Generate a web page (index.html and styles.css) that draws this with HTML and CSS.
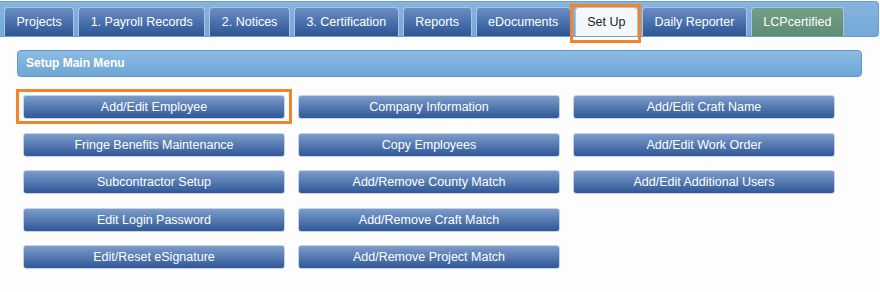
FILE: index.html
```html
<!DOCTYPE html>
<html lang="en">
<head>
    <meta charset="UTF-8">
    <title>Set Up</title>
    <link rel="stylesheet" href="styles.css">
</head>
<body>
    <div class="tabbar">
        <a class="tab">Projects</a>
        <a class="tab">1. Payroll Records</a>
        <a class="tab">2. Notices</a>
        <a class="tab">3. Certification</a>
        <a class="tab">Reports</a>
        <a class="tab">eDocuments</a>
        <a class="tab active marked">Set Up</a>
        <a class="tab">Daily Reporter</a>
        <a class="tab green">LCPcertified</a>
    </div>

    <div class="content">
        <div class="section-head">Setup Main Menu</div>
        <div class="menu-grid">
            <button class="menu-btn marked">Add/Edit Employee</button>
            <button class="menu-btn">Company Information</button>
            <button class="menu-btn">Add/Edit Craft Name</button>
            <button class="menu-btn">Fringe Benefits Maintenance</button>
            <button class="menu-btn">Copy Employees</button>
            <button class="menu-btn">Add/Edit Work Order</button>
            <button class="menu-btn">Subcontractor Setup</button>
            <button class="menu-btn">Add/Remove County Match</button>
            <button class="menu-btn">Add/Edit Additional Users</button>
            <button class="menu-btn">Edit Login Password</button>
            <button class="menu-btn">Add/Remove Craft Match</button>
            <span></span>
            <button class="menu-btn">Edit/Reset eSignature</button>
            <button class="menu-btn">Add/Remove Project Match</button>
        </div>
    </div>
</body>
</html>
```

FILE: styles.css
```css
body {
    margin: 0;
    background-color: #fdfdfd;
    font-family: "Liberation Sans", Arial, sans-serif;
}
.tabbar {
    display: flex;
    gap: 4px;
    width: 874px;
    height: 29px;
    margin-top: 1px;
    padding: 5px 0 0 4px;
    background: linear-gradient(#86b4de, #74a8d8);
    border: 1px solid #6a9fd2;
    border-left: none;
    border-radius: 0 4px 4px 0;
}
.tab {
    position: relative;
    display: flex;
    align-items: center;
    justify-content: center;
    padding: 0 11.5px;
    height: 28px;
    color: #fff;
    font-size: 12.5px;
    background: linear-gradient(#6a8ec4, #2d5595);
    border: 1px solid #a9c3e2;
    border-bottom: none;
    border-radius: 4px 4px 0 0;
}
.tab.active {
    color: #222;
    background: #f5f8fb;
}
.tab.green {
    background: linear-gradient(#71a086, #5e8d74);
}
.tab.marked::after {
    content: "";
    position: absolute;
    top: -4px;
    left: -6px;
    right: -4px;
    bottom: -7px;
    border: 3px solid #f4832a;
}
.content {
    padding: 13px 18px 0 17px;
}
.section-head {
    height: 25px;
    padding-left: 8px;
    line-height: 25px;
    color: #fff;
    font-size: 12px;
    font-weight: bold;
    background: linear-gradient(#8dbbe1, #6ea6d6);
    border: 1px solid #5e98cf;
    border-radius: 4px;
}
.menu-grid {
    display: grid;
    grid-template-columns: repeat(3, 262px);
    column-gap: 13px;
    row-gap: 13.5px;
    padding: 18px 0 0 6px;
}
.menu-btn {
    position: relative;
    height: 24px;
    padding: 0;
    color: #fff;
    font-family: inherit;
    font-size: 12.5px;
    background: linear-gradient(#7c9ccb, #2f5897);
    border: 1px solid #c5d3e7;
    border-radius: 3px;
}
.menu-btn.marked::after {
    content: "";
    position: absolute;
    top: -7px;
    left: -8px;
    right: -8px;
    bottom: -6px;
    border: 3px solid #f4832a;
}
```
